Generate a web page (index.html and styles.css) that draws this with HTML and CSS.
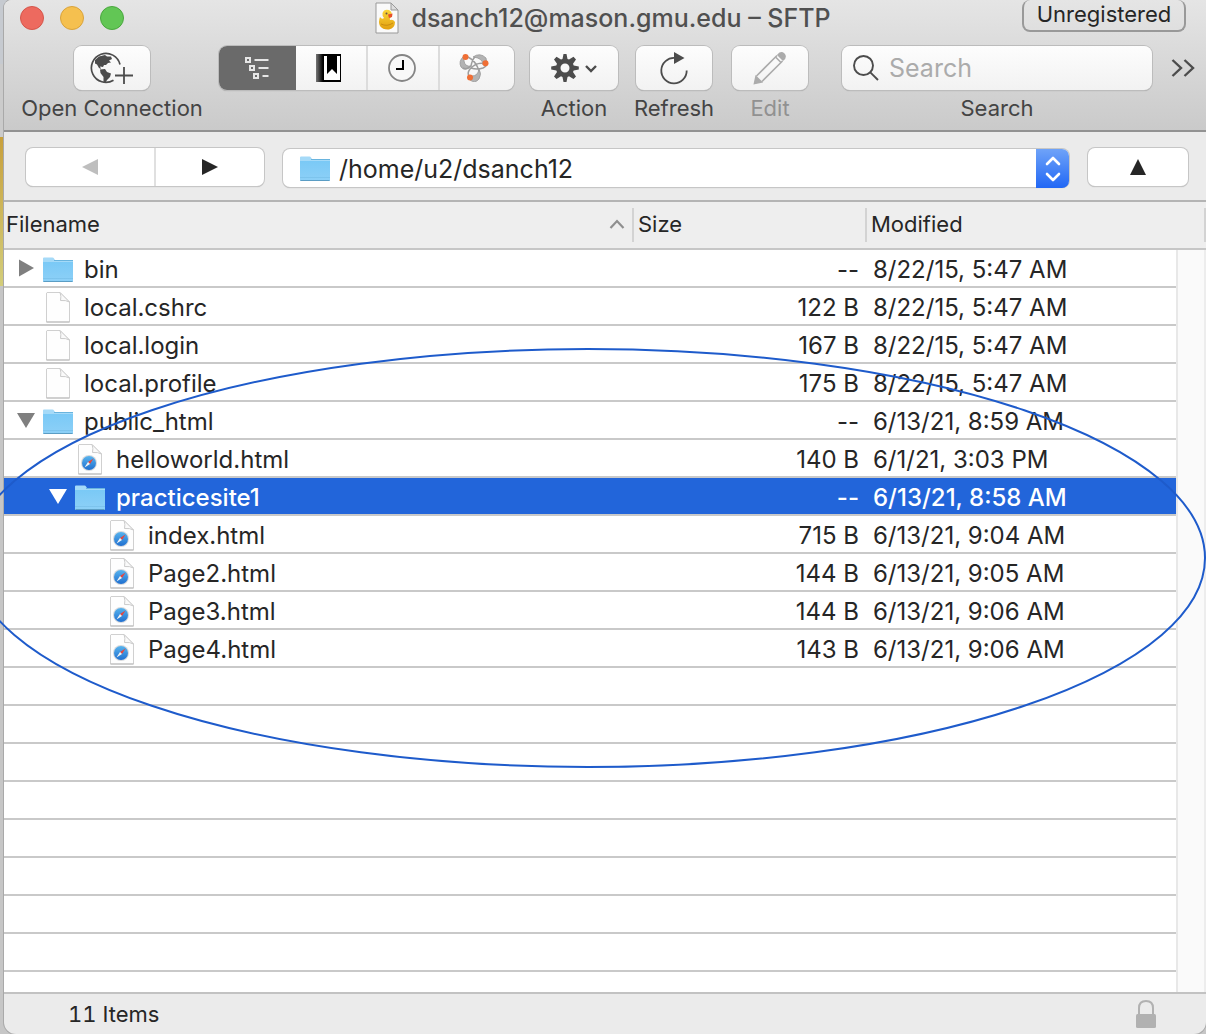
FILE: index.html
```html
<!DOCTYPE html>
<html lang="en">
<head>
<meta charset="utf-8">
<meta name="viewport" content="width=device-width, initial-scale=1">
<title>dsanch12@mason.gmu.edu – SFTP</title>
<link rel="stylesheet" href="styles.css">
</head>
<body>
<svg class="sprite" aria-hidden="true">
  <defs>
    <linearGradient id="folder-fill" x1="0" y1="0" x2="0" y2="1"><stop offset="0" stop-color="#7ac9f6"/><stop offset="1" stop-color="#8dd0f7"/></linearGradient>
    <linearGradient id="compass-fill" x1="0" y1="0" x2="0" y2="1"><stop offset="0" stop-color="#58b4ee"/><stop offset="1" stop-color="#1f6fd0"/></linearGradient>
    <linearGradient id="book-spine"><stop offset="0" stop-color="#777"/><stop offset="1" stop-color="#000"/></linearGradient>
    <linearGradient id="duck-fill" x1="0" y1="0" x2="0" y2="1"><stop offset="0" stop-color="#fbd63a"/><stop offset="1" stop-color="#e2a010"/></linearGradient>
  </defs>
  <symbol id="folder" viewBox="0 0 32 32">
    <path d="M1 27V4.500Q1 3.500 2 3.500H10.500Q11.500 3.500 12 4.500L13 6H30Q31 6 31 7V27Q31 28 30 28H2Q1 28 1 27Z" fill="#a5daf8"/>
    <path d="M1 8H31V27Q31 28 30 28H2Q1 28 1 27Z" fill="url(#folder-fill)"/>
    <path d="M12 6.500H31" stroke="#69b4de"/>
    <path d="M1 24.500H31" stroke="#77bfe8" stroke-width=".7"/>
    <path d="M1.500 27.500H30.500" stroke="#5b9dc4"/>
  </symbol>
  <symbol id="page" viewBox="0 0 32 32">
    <path d="M5 .5H18L27.500 10V30H4.500V1Z" fill="#fefefe" stroke="#d0d0d0"/>
    <path d="M18 .5Q19.500 4 18.500 8.500Q24 8 27.500 10Z" fill="#fafafa" stroke="#cbcbcb" stroke-linejoin="round"/>
    <path d="M4.500 30H27.500" stroke="#b9b9b9"/>
  </symbol>
  <symbol id="webpage" viewBox="0 0 32 32">
    <use href="#page"/>
    <circle cx="15" cy="19" r="8" fill="#d6d9dd"/>
    <circle cx="15" cy="19" r="7" fill="url(#compass-fill)"/>
    <path d="M19.500 14.500L16 20L14 18Z" fill="#e8453c"/>
    <path d="M10.500 23.500L14 18L16 20Z" fill="#f4f4f4"/>
  </symbol>
  <symbol id="closed" viewBox="0 0 22 20"><path d="M4 1.500V18.500L19 10Z" fill="currentColor"/></symbol>
  <symbol id="open" viewBox="0 0 22 20"><path d="M2 3H20L11 18Z" fill="currentColor"/></symbol>
</svg>

<main class="window">
  <header class="titlebar">
    <div class="title-row">
      <div class="lights">
        <button class="light red" aria-label="Close"></button>
        <button class="light yellow" aria-label="Minimize"></button>
        <button class="light green" aria-label="Zoom"></button>
      </div>
      <h1 class="title">
        <svg class="title-icon" viewBox="0 0 24 32" aria-hidden="true">
          <path d="M1 1H16L23 8V31H1Z" fill="#fafafa" stroke="#999"/>
          <path d="M16 1V8H23Z" fill="#ddd" stroke="#999"/>
          <path d="M5 15Q3 20 5 24Q8 28 14 27.500Q20 26 20 20Q18 17 15 18Q14 17 16 15Q18 10 14 8Q9 6.500 7.500 11Q7 14 9 16Q7 18 5 15Z" fill="url(#duck-fill)"/>
          <path d="M13 12.500L17.500 11.500L17 15L14 16Z" fill="#e8502a"/>
          <circle cx="11.500" cy="11.500" r="1" fill="#654"/>
          <path d="M6 22Q12 25 18 21" fill="none" stroke="#c98d10"/>
        </svg>
        <span>dsanch12@mason.gmu.edu – SFTP</span>
      </h1>
      <button class="registration">Unregistered</button>
    </div>

    <div class="toolbar">
      <div class="tool tool-open">
        <button class="tool-button" aria-labelledby="open-label">
          <svg width="44" height="32" viewBox="0 0 44 32" aria-hidden="true">
            <path d="M30 12.500A14.500 14.500 0 1 0 23.500 28.200" fill="none" stroke="#4c4c4c" stroke-width="1.700"/>
            <path d="M5 8L9 4.500L15 3L17 4.500L21 4.500L22 7L19 8.500L21 10.500L18 11L16 13L14 13L13 15L10 14.500L11 17L9 16L7 12.500L5 11.500Z" fill="#4c4c4c"/>
            <path d="M10 17.500L15 17L17 20L21 21.500L20 25L17 28L15.500 31L13.500 30.500L13.500 25L10.500 21Z" fill="#4c4c4c"/>
            <path d="M25 23.500H43M34 15V32" stroke="#4c4c4c" stroke-width="1.800"/>
          </svg>
        </button>
        <span class="tool-label" id="open-label">Open Connection</span>
      </div>
      <div class="segments" role="group" aria-label="View">
        <button class="segment selected" aria-label="Outline">
          <svg width="26" height="24" viewBox="0 0 26 24" fill="none" stroke="#e6e6e6" stroke-width="2" aria-hidden="true"><path d="M1 2H5V6H1ZM5 10H9V14H5ZM9 18H13V22H9ZM9.500 4H23.500M13.500 12H23.500M17.500 20H23.500"/></svg>
        </button>
        <button class="segment" aria-label="Bookmarks">
          <svg width="30" height="28" viewBox="0 0 30 28" aria-hidden="true"><path d="M0 0H25V28H0Z"/><path d="M0 0H7V28H0Z" fill="url(#book-spine)"/><path d="M8 2H11V20L16 15L21 20V2H24V26H8Z" fill="#fff"/></svg>
        </button>
        <button class="segment" aria-label="History">
          <svg width="30" height="28" viewBox="0 0 30 28" aria-hidden="true"><circle cx="14" cy="14" r="13" fill="#f8f8f8" stroke="#858585" stroke-width="1.800"/><path d="M15 6V15H8" fill="none" stroke="#000" stroke-width="2"/></svg>
        </button>
        <button class="segment" aria-label="Bonjour">
          <svg width="36" height="28" viewBox="0 0 36 28" aria-hidden="true">
            <path d="M5 2Q-1 7 2 13Q6 18 12 12Q6 13 5 7ZM14 3Q21 -2 27 4L28 10L24 11Q24 4 14 3ZM11 26Q16 30 20 25Q23 20 20 15Q19 22 13 22Z" fill="#b3b3b3" stroke="#999" stroke-width=".8"/>
            <path d="M9 3Q17 7 20 17M27 10Q18 7 11 15Q8 19 10 22M16 3Q13 6 12 12Q8 16 4 14M12 14Q18 16 24 14Q28 12 28 9" fill="none" stroke="#9d9d9d" stroke-width="1.500"/>
            <g fill="#f06f35"><circle cx="6.500" cy="3" r="3"/><circle cx="26.500" cy="9.300" r="3"/><circle cx="11" cy="23.500" r="3"/></g>
          </svg>
        </button>
      </div>
      <div class="tool tool-action">
        <button class="tool-button" aria-labelledby="action-label">
          <svg width="46" height="28" viewBox="0 0 46 28" aria-hidden="true">
            <path fill-rule="evenodd" fill="#4c4c4c" d="M12.500 0H15.500L16.500 5L18 5.600L22.500 2.800L25 5.400L22 9.800L22.700 11.500L27.800 12.500V15.500L22.700 16.500L22 18L25 22.600L22.500 25L18 22.300L16.500 22.900L15.500 28H12.500L11.500 22.900L10 22.300L5.500 25L3 22.600L6 18L5.300 16.500L.2 15.500V12.500L5.300 11.500L6 9.800L3 5.400L5.500 2.800L10 5.600L11.500 5ZM14 9.500A4.500 4.500 0 1 0 14 18.500A4.500 4.500 0 1 0 14 9.500Z"/>
            <path d="M35 12L40 17L45 12" fill="none" stroke="#4c4c4c" stroke-width="2.400"/>
          </svg>
        </button>
        <span class="tool-label" id="action-label">Action</span>
      </div>
      <div class="tool tool-small">
        <button class="tool-button" aria-labelledby="refresh-label">
          <svg width="28" height="34" viewBox="0 0 28 34" aria-hidden="true"><path d="M15 7A12.700 12.700 0 1 0 26.700 19.500" fill="none" stroke="#4c4c4c" stroke-width="1.800"/><path d="M14 1L24.500 7L14 13Z" fill="#4c4c4c"/></svg>
        </button>
        <span class="tool-label" id="refresh-label">Refresh</span>
      </div>
      <div class="tool tool-small disabled">
        <button class="tool-button" disabled aria-labelledby="edit-label">
          <svg width="34" height="34" viewBox="0 0 34 34" aria-hidden="true" fill="none" stroke="#ababab" stroke-width="1.600"><path d="M3.500 25L24 4.500M9 30.500L29.500 10"/><path d="M3 25.500L1.500 32.500L8.500 31Z" fill="#ababab"/><path d="M25 4Q28 .5 31 3Q33.500 6 30 9Z" fill="#ababab"/><path d="M22.500 6L28 11.500"/></svg>
        </button>
        <span class="tool-label" id="edit-label">Edit</span>
      </div>
      <div class="tool tool-search">
        <div class="search-box">
          <svg width="26" height="26" viewBox="0 0 26 26" aria-hidden="true" fill="none" stroke="#4c4c4c" stroke-width="1.900"><circle cx="10.500" cy="10.500" r="9.500"/><path d="M17.300 17.300L25 25"/></svg>
          <input class="search-input" id="search" type="search" placeholder="Search">
        </div>
        <label class="tool-label" for="search">Search</label>
      </div>
      <button class="more" aria-label="More">
        <svg width="24" height="20" viewBox="0 0 24 20" fill="none" stroke="#4c4c4c" stroke-width="2.400" aria-hidden="true"><path d="M1.500 2L10 10L1.500 18M13.500 2L22 10L13.500 18"/></svg>
      </button>
    </div>
  </header>

  <nav class="pathbar" aria-label="Location">
    <div class="history">
      <button class="history-button back" disabled aria-label="Back"><svg width="16" height="16" viewBox="0 0 16 16" aria-hidden="true"><path d="M16 0V16L0 8Z" fill="#bebebe"/></svg></button>
      <button class="history-button forward" aria-label="Forward"><svg width="16" height="16" viewBox="0 0 16 16" aria-hidden="true"><path d="M0 0V16L16 8Z" fill="#262626"/></svg></button>
    </div>
    <div class="path">
      <select class="path-select" aria-label="Folder"><option>/home/u2/dsanch12</option></select>
      <svg class="path-icon" aria-hidden="true"><use href="#folder"/></svg>
      <span class="stepper"><svg width="16" height="26" viewBox="0 0 16 26" fill="none" stroke="#fff" stroke-width="2.600" stroke-linecap="round" stroke-linejoin="round" aria-hidden="true"><path d="M2 8L8 2L14 8M2 18L8 24L14 18"/></svg></span>
    </div>
    <button class="up" aria-label="Parent folder"><svg width="16" height="16" viewBox="0 0 16 16" aria-hidden="true"><path d="M8 0L16 16H0Z" fill="#262626"/></svg></button>
  </nav>

  <section class="listing">
    <table class="files">
      <colgroup><col><col class="col-size"><col class="col-date"><col class="col-scroll"></colgroup>
      <thead>
        <tr>
          <th scope="col"><div class="heading">Filename<svg width="16" height="10" viewBox="0 0 16 10" aria-hidden="true"><path d="M1.500 9L8 2L14.500 9" fill="none" stroke="#8f8f8f" stroke-width="2.200"/></svg></div></th>
          <th scope="col"><div class="heading">Size</div></th>
          <th scope="col" colspan="2"><div class="heading">Modified</div></th>
        </tr>
      </thead>
      <tbody>
        <tr><td><div class="entry"><button class="twisty" aria-label="Expand bin"><svg><use href="#closed"/></svg></button><svg class="icon"><use href="#folder"/></svg>bin</div></td><td>--</td><td>8/22/15, 5:47 AM</td><td></td></tr>
        <tr><td><div class="entry"><span class="twisty"></span><svg class="icon"><use href="#page"/></svg>local.cshrc</div></td><td>122 B</td><td>8/22/15, 5:47 AM</td><td></td></tr>
        <tr><td><div class="entry"><span class="twisty"></span><svg class="icon"><use href="#page"/></svg>local.login</div></td><td>167 B</td><td>8/22/15, 5:47 AM</td><td></td></tr>
        <tr><td><div class="entry"><span class="twisty"></span><svg class="icon"><use href="#page"/></svg>local.profile</div></td><td>175 B</td><td>8/22/15, 5:47 AM</td><td></td></tr>
        <tr><td><div class="entry"><button class="twisty" aria-label="Collapse public_html"><svg><use href="#open"/></svg></button><svg class="icon"><use href="#folder"/></svg>public_html</div></td><td>--</td><td>6/13/21, 8:59 AM</td><td></td></tr>
        <tr><td><div class="entry level-1"><span class="twisty"></span><svg class="icon"><use href="#webpage"/></svg>helloworld.html</div></td><td>140 B</td><td>6/1/21, 3:03 PM</td><td></td></tr>
        <tr class="current"><td><div class="entry level-1"><button class="twisty" aria-label="Collapse practicesite1"><svg><use href="#open"/></svg></button><svg class="icon"><use href="#folder"/></svg>practicesite1</div></td><td>--</td><td>6/13/21, 8:58 AM</td><td></td></tr>
        <tr><td><div class="entry level-2"><span class="twisty"></span><svg class="icon"><use href="#webpage"/></svg>index.html</div></td><td>715 B</td><td>6/13/21, 9:04 AM</td><td></td></tr>
        <tr><td><div class="entry level-2"><span class="twisty"></span><svg class="icon"><use href="#webpage"/></svg>Page2.html</div></td><td>144 B</td><td>6/13/21, 9:05 AM</td><td></td></tr>
        <tr><td><div class="entry level-2"><span class="twisty"></span><svg class="icon"><use href="#webpage"/></svg>Page3.html</div></td><td>144 B</td><td>6/13/21, 9:06 AM</td><td></td></tr>
        <tr><td><div class="entry level-2"><span class="twisty"></span><svg class="icon"><use href="#webpage"/></svg>Page4.html</div></td><td>143 B</td><td>6/13/21, 9:06 AM</td><td></td></tr>
      </tbody>
    </table>
    <div class="blank"><div class="blank-rows"></div><div class="blank-scroll"></div></div>
    <svg class="callout" viewBox="0 0 1236 422" preserveAspectRatio="none" aria-hidden="true"><ellipse cx="618" cy="211" rx="617" ry="209" fill="none" stroke="#1e5bcb" stroke-width="2"/></svg>
  </section>

  <footer class="status">
    <span>11 Items</span>
    <svg width="20" height="28" viewBox="0 0 20 28" role="img" aria-label="Secure connection"><path d="M3 15V8Q3 1 10 1Q17 1 17 8V15" fill="none" stroke="#b1b1b1" stroke-width="2"/><rect y="14" width="20" height="14" rx="1.500" fill="#b1b1b1"/></svg>
  </footer>
</main>
</body>
</html>
```
FILE: styles.css
```css
* { box-sizing: border-box; }

body {
  margin: 0;
  padding-left: 4px;
  overflow-x: hidden;
  font-family: Inter, "Liberation Sans", sans-serif;
  font-size: 24px;
  line-height: 28px;
  color: #262626;
  background: linear-gradient(#c6cad0 0 64px, #cbcbcb 64px 137px, #c8a03c 137px, #d3cd7a 286px, #c6c6c6 286px);
}

button, input, select { font: inherit; color: inherit; margin: 0; }
button { display: flex; align-items: center; justify-content: center; padding: 0; border: 0; background: none; }
svg { display: block; flex: none; }
.sprite { position: absolute; width: 0; height: 0; }

.window {
  display: flex;
  flex-direction: column;
  min-height: 100vh;
  border-radius: 8px 0 12px 12px;
  background: #ebebeb;
  box-shadow: 0 0 0 1px #a9a9a9;
}

/* Title bar and toolbar */
.titlebar {
  height: 132px;
  border-bottom: 2px solid #929292;
  border-radius: 8px 0 0 0;
  background: linear-gradient(#e5e5e5, #cacaca);
}
.title-row {
  display: grid;
  grid-template-columns: 1fr auto 1fr;
  align-items: center;
  height: 38px;
  padding: 0 20px 2px 16px;
}
.lights { display: flex; gap: 16px; }
.light { width: 24px; height: 24px; border-radius: 50%; border: 1px solid; }
.red { background: #ed6a5f; border-color: #d5564b; }
.yellow { background: #f5c04f; border-color: #d9a33c; }
.green { background: #62c655; border-color: #4aa73e; }
.title {
  display: flex;
  align-items: center;
  gap: 12px;
  margin: 0;
  font-size: 25px;
  font-weight: 500;
  color: #505050;
}
.title-icon { width: 24px; height: 32px; }
.registration {
  align-self: start;
  justify-self: end;
  width: 164px;
  height: 32px;
  padding-bottom: 2px;
  border: 2px solid #999;
  border-top: 0;
  border-radius: 8px;
  font-size: 22px;
}
.toolbar {
  display: flex;
  align-items: flex-start;
  gap: 16px;
  padding: 8px 9px 0 17px;
}
.tool { display: flex; flex-direction: column; align-items: center; gap: 4px; }
.tool-button, .segments, .search-box {
  height: 44px;
  border-radius: 8px;
  background: linear-gradient(#fdfdfd, #f2f2f2);
  box-shadow: 0 0 0 1px #bcbcbc, 0 1px 1px #999;
}
.tool-button { width: 76px; }
.tool-open { width: 182px; }
.tool-action, .tool-action .tool-button { width: 88px; }
.tool-small { width: 80px; }
.tool-search { flex: 1; min-width: 0; margin-left: 16px; }
.tool-label { font-size: 22px; white-space: nowrap; color: #444; }
.disabled .tool-label { color: #919191; }
.segments { display: flex; width: 295px; overflow: hidden; }
.segment { width: 72px; border-left: 2px solid #dcdcdc; }
.segment.selected { width: 77px; border: 0; background: #6a6a6a; }
.selected + .segment { width: 70px; border: 0; }
.segment:last-child { flex: 1; }
.search-box { display: flex; align-items: center; gap: 10px; width: 100%; padding: 0 11px; }
.search-input { flex: 1; min-width: 0; padding: 0; border: 0; outline: 0; background: none; font-size: 25px; appearance: none; }
.search-input::placeholder { color: #ababab; opacity: 1; }
.more { width: 29px; height: 44px; }

/* Location bar */
.pathbar {
  display: flex;
  align-items: center;
  gap: 19px;
  height: 70px;
  padding: 2px 18px 0 22px;
  border-bottom: 2px solid #b4b4b4;
}
.history, .path, .up {
  height: 38px;
  border-radius: 7px;
  background: #fff;
  box-shadow: 0 0 0 1px #c6c6c6, 0 1px 1px #aaa;
}
.history { display: flex; width: 238px; }
.back { width: 130px; border-right: 2px solid #e0e0e0; }
.forward { flex: 1; }
.path { position: relative; flex: 1; min-width: 0; margin-top: 2px; }
.path-select {
  display: block;
  width: 100%;
  height: 38px;
  padding: 2px 40px 0 56px;
  border: 0;
  border-radius: 7px;
  background: none;
  appearance: none;
  font-size: 25px;
}
.path-icon { position: absolute; left: 16px; top: 4px; width: 32px; height: 32px; pointer-events: none; }
.stepper {
  position: absolute;
  top: 0;
  right: 0;
  display: grid;
  place-items: center;
  width: 33px;
  height: 39px;
  border-radius: 0 7px 7px 0;
  background: linear-gradient(#6fa3f8, #2167f5);
  pointer-events: none;
}
.up { width: 100px; }

/* File list */
.listing { position: relative; display: flex; flex: 1; flex-direction: column; }
.files { width: 100%; table-layout: fixed; border-collapse: separate; border-spacing: 0; background: #fff; }
.col-size { width: 233px; }
.col-date { width: 309px; }
.col-scroll { width: 30px; }
th {
  height: 48px;
  padding: 0;
  border-bottom: 2px solid #c6c6c6;
  background: #eee;
  font-size: 22px;
  font-weight: 400;
  text-align: left;
}
.heading {
  display: flex;
  align-items: center;
  justify-content: space-between;
  height: 34px;
  padding: 0 7px 2px 4px;
  border-right: 2px solid #d3d3d3;
}
th:first-child .heading { padding-left: 2px; }
td { height: 38px; padding: 3px 0 0; border-bottom: 2px solid #c9c9c9; white-space: nowrap; }
td:first-child { padding: 0; }
td:nth-child(2) { padding-right: 8px; text-align: right; }
td:nth-child(3) { padding-left: 6px; }
td:nth-child(4), .blank-scroll { border: 0; border-left: 2px solid #e8e8e8; border-right: 2px solid #ededed; background: #fafafa; }
.entry { display: flex; align-items: center; height: 36px; padding: 3px 0 0 11px; }
.level-1 { padding-left: 43px; }
.level-2 { padding-left: 75px; }
.twisty { width: 22px; height: 20px; margin-bottom: 3px; color: #7f7f7f; }
.twisty svg { width: 22px; height: 20px; }
.icon { width: 32px; height: 32px; margin: 0 10px 0 5px; }
.current td:not(:last-child) { background: #2265da; background-clip: padding-box; color: #fff; font-weight: 500; }
.current .twisty { color: #fff; }
.blank { display: flex; flex: 1; }
.blank-rows { flex: 1; background: repeating-linear-gradient(#fff 0 36px, #c9c9c9 36px 38px); }
.blank-scroll { width: 30px; }
.callout { position: absolute; top: 145px; left: -34px; width: calc(100% + 34px); height: 422px; pointer-events: none; }

/* Status bar */
.status {
  display: flex;
  align-items: center;
  justify-content: space-between;
  height: 42px;
  padding: 0 50px 0 64px;
  border-top: 2px solid #c2c2c2;
  font-size: 22px;
  font-variant-numeric: tabular-nums;
}
```
